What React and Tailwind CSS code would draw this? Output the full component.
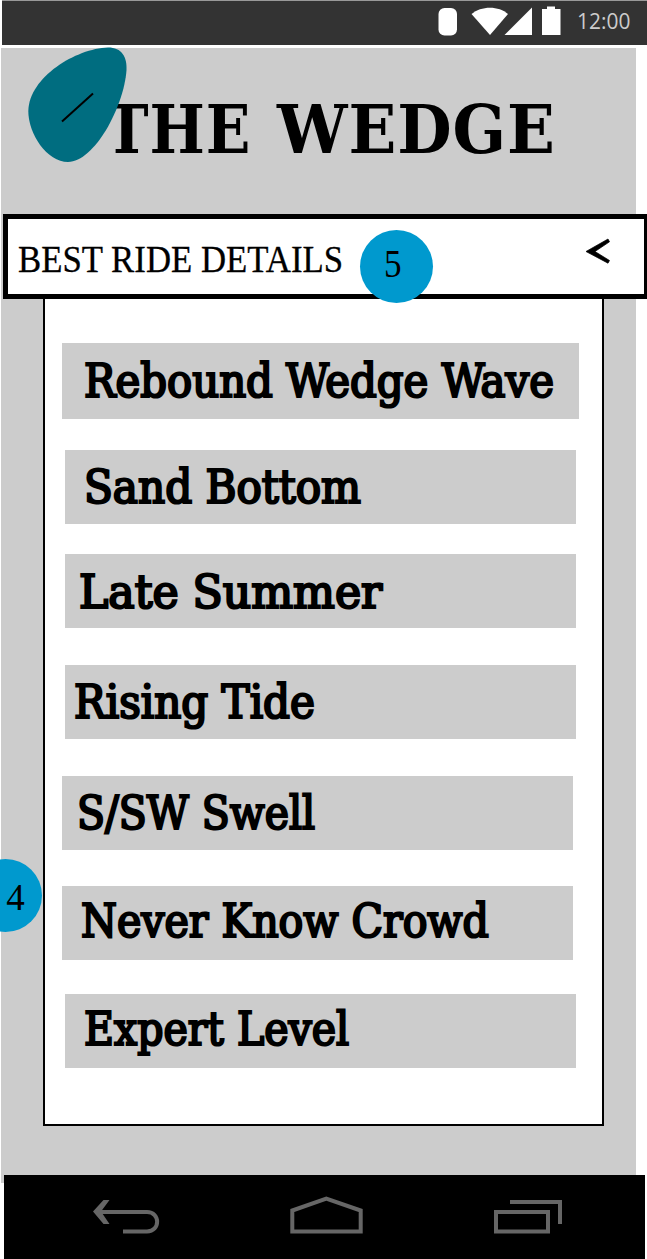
import { useLayoutEffect, useRef, useState } from "react";

// Text condensed or widened horizontally to occupy a given width.
function FitText({ width, className, children }) {
  const ref = useRef(null);
  const [scale, setScale] = useState(1);
  useLayoutEffect(() => {
    setScale(width / ref.current.offsetWidth);
  }, [width]);
  return (
    <span
      ref={ref}
      className={`inline-block shrink-0 origin-left whitespace-nowrap ${className}`}
      style={{ transform: `scaleX(${scale})` }}
    >
      {children}
    </span>
  );
}

const details = [
  { label: "Rebound Wedge Wave", width: 470, bar: "h-[76px] w-[517px] ml-[17px] pl-[22px] pb-[1px]" },
  { label: "Sand Bottom", width: 277, bar: "h-[74px] w-[511px] ml-[20px] mt-[31px] pl-[19px]" },
  { label: "Late Summer", width: 303, bar: "h-[74px] w-[511px] ml-[20px] mt-[30px] pl-[14px] pt-[1px]" },
  { label: "Rising Tide", width: 241, bar: "h-[74px] w-[511px] ml-[20px] mt-[37px] pl-[9px]" },
  { label: "S/SW Swell", width: 238, bar: "h-[74px] w-[511px] ml-[17px] mt-[37px] pl-[15px] pb-[1px]" },
  { label: "Never Know Crowd", width: 408, bar: "h-[74px] w-[511px] ml-[17px] mt-[36px] pl-[19px] pb-[4px]" },
  { label: "Expert Level", width: 265, bar: "h-[74px] w-[511px] ml-[20px] mt-[34px] pl-[19px] pb-[5px]" },
];

function StatusBar() {
  return (
    <header className="ml-[2px] flex h-[45px] items-start border-t border-[#999] bg-[#333]">
      <svg className="ml-[433px] h-[44px] w-[130px] shrink-0" viewBox="435 1 130 44" fill="#fff">
        <rect x="438.500" y="8" width="18.500" height="27.500" rx="6" />
        <path d="M471.500 14C481 5.500 499 5.500 508 14L490 35Z" />
        <path d="M504.500 35L532 7.500V35Z" />
        <path d="M542 9H547V6.500H555V9H560.500V35H542Z" />
      </svg>
      <div className="ml-[12px] mt-[4px] font-['Open_Sans',sans-serif] text-[22.500px] leading-[31px] text-[#ccc]">
        <FitText width={53} className="">12:00</FitText>
      </div>
    </header>
  );
}

function NavBar() {
  return (
    <nav className="ml-[4px] flex h-[84px] w-[641px] bg-black text-[#666]">
      <svg className="ml-[84px] mt-[16px] h-[50px] w-[80px]" viewBox="88 1191 80 50" fill="none" stroke="currentColor" strokeWidth="4">
        <path d="M98 1212H147C160.500 1212 160.500 1231.500 147 1231.500H123" />
        <path d="M93 1211.500L103.500 1200H109.500L101 1211.500L109.500 1224H103.500Z" fill="currentColor" stroke="none" />
      </svg>
      <svg className="ml-[117px] mt-[16px] h-[50px] w-[80px]" viewBox="285 1191 80 50" fill="none" stroke="currentColor" strokeWidth="4">
        <path d="M292.300 1231.500V1210.500L326.300 1198.500L360.700 1210.500V1231.500Z" />
      </svg>
      <svg className="ml-[124px] mt-[16px] h-[50px] w-[80px]" viewBox="489 1191 80 50" fill="none" stroke="currentColor" strokeWidth="4">
        <path d="M496 1212H548V1231.500H496Z" />
        <path d="M510 1202H560V1224" />
      </svg>
    </nav>
  );
}

export default function App() {
  return (
    <div className="relative h-[1259px] w-[647px] overflow-hidden bg-white text-black">
      <StatusBar />
      <main className="ml-[1px] mt-[3px] flex h-[1127px] w-[635px] flex-col bg-[#ccc]">
        <div className="relative flex h-[166px] shrink-0">
          <h1 className="ml-[104px] mt-[37px] flex gap-[28px] font-['DejaVu_Serif',serif] text-[67px] font-bold leading-[90px] tracking-[1px]">
            <span className="w-[144px]">
              <FitText width={146} className="">THE</FitText>
            </span>
            <span className="w-[280px]">
              <FitText width={279} className="">WEDGE</FitText>
            </span>
          </h1>
          <svg className="absolute left-[26px] top-[-3px] h-[120px] w-[104px]" viewBox="27 45 104 120">
            <path d="M28.300 111C29 77 76 48.500 108 47.500C122 47.500 127 57 126.500 70C124 107 94 162 68 162C47 162 28.300 134 28.300 111Z" fill="#006d80" />
            <path d="M62 121.500L93 93.500" stroke="#000" strokeWidth="2" />
          </svg>
        </div>
        <section className="relative ml-[1.500px] flex h-[85px] w-[646px] shrink-0 border-[5px] border-black bg-white">
          <h2 className="ml-[10px] mt-[13px] font-['Liberation_Serif',serif] text-[38px] leading-[54px] [-webkit-text-stroke:0.3px_black]">
            <FitText width={325} className="">BEST RIDE DETAILS</FitText>
          </h2>
          <span className="absolute left-[352px] top-[11px] flex h-[73px] w-[73px] items-center justify-center rounded-full bg-[#0099ce] pb-[6px] pr-[5px] font-['Liberation_Serif',serif] text-[39px] leading-none">
            <FitText width={18} className="">5</FitText>
          </span>
          <svg className="absolute left-[575px] top-[18px] h-[30px] w-[32px]" viewBox="582 237 32 30">
            <path d="M585 251.500L607 239L608.500 241.800L594 251.500L608.500 260.500L607 263.200Z" fill="#000" stroke="#000" strokeWidth="0.700" />
          </svg>
        </section>
        <section className="ml-[42px] h-[827px] w-[561px] shrink-0 border-x-2 border-b-2 border-black bg-white pt-[44px]">
          {details.map(({ label, width, bar }) => (
            <div key={label} className={`flex items-center bg-[#ccc] ${bar}`}>
              <FitText
                width={width}
                className="font-['DejaVu_Serif_Condensed','DejaVu_Serif',serif] text-[46px] leading-[74px] [-webkit-text-stroke:2.2px_black]"
              >
                {label}
              </FitText>
            </div>
          ))}
        </section>
      </main>
      <span className="absolute left-[-31px] top-[859px] flex h-[73px] w-[73px] items-center justify-center rounded-full bg-[#0099ce] pl-[20px] pt-[4px] font-['Liberation_Serif',serif] text-[37px] leading-none">4</span>
      <NavBar />
      <span className="absolute left-[1px] top-[1175px] h-[8px] w-[3px] bg-[#ccc]" />
    </div>
  );
}
